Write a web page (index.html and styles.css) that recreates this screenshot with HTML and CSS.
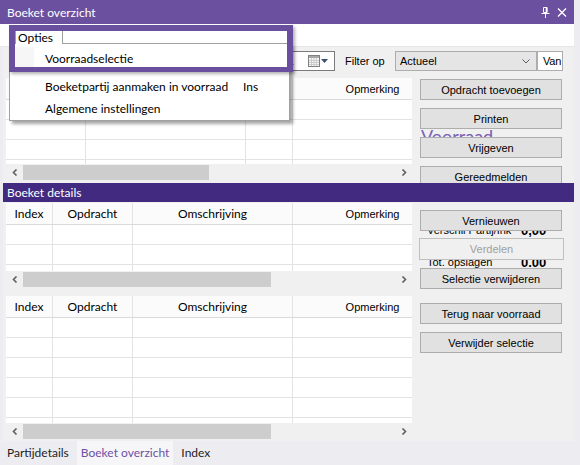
FILE: index.html
```html
<!DOCTYPE html>
<html>
<head>
<meta charset="utf-8">
<title>Boeket overzicht</title>
<link rel="stylesheet" href="styles.css">
</head>
<body>
<div class="app">
  <div class="window">
    <div class="titlebar">
      <span class="title">Boeket overzicht</span>
      <span class="title-icons">
        <svg class="pin" width="9" height="11" viewBox="0 0 9 11"><path d="M2.5 0.5h3.5v5h-3.5z" fill="none" stroke="#fff"/><path d="M5.5 0.5v5" stroke="#fff" stroke-width="1.6"/><path d="M0.5 6.5h8M4.5 6.5v4.5" stroke="#fff"/></svg>
        <svg class="close" width="10" height="9" viewBox="0 0 10 9"><path d="M1 0.5l8 8M9 0.5l-8 8" stroke="#fff" stroke-width="1.3"/></svg>
      </span>
    </div>
    <div class="menubar"></div>

    <div class="panel panel-top">
      <div class="filter-row">
        <div class="datebox">
          <span class="date-text">01-01-2021</span>
          <svg width="12" height="12" viewBox="0 0 12 12"><rect x="0.5" y="0.5" width="11" height="11" fill="#f6f6f6" stroke="#808080"/><rect x="1" y="1" width="10" height="2" fill="#a8a8a8"/><path d="M1 5.5h10M1 7.5h10M1 9.5h10M3.5 3v8M6 3v8M8.5 3v8" stroke="#c4c4c4" stroke-width="0.8"/></svg>
          <svg class="tri" width="7" height="4" viewBox="0 0 7 4"><path d="M0 0h7L3.5 4z" fill="#3d4f70"/></svg>
        </div>
        <span class="filter-label">Filter op</span>
        <div class="combo">
          <span>Actueel</span>
          <svg width="8" height="5" viewBox="0 0 8 5"><path d="M0.5 0.5L4 4L7.5 0.5" fill="none" stroke="#606060"/></svg>
        </div>
        <div class="van">Van</div>
      </div>

      <div class="top-body">
        <div class="grid">
          <div class="grid-view gv1">
            <div class="gtable">
              <div class="grow ghead"><div class="c w80">Opdracht</div><div class="c w160">Omschrijving</div><div class="c w47">Index</div><div class="c w160 classic">Opmerking</div></div>
              <div class="grow"><div class="c w80"></div><div class="c w160"></div><div class="c w47"></div><div class="c w160"></div></div>
              <div class="grow"><div class="c w80"></div><div class="c w160"></div><div class="c w47"></div><div class="c w160"></div></div>
              <div class="grow"><div class="c w80"></div><div class="c w160"></div><div class="c w47"></div><div class="c w160"></div></div>
              <div class="grow"><div class="c w80"></div><div class="c w160"></div><div class="c w47"></div><div class="c w160"></div></div>
            </div>
          </div>
          <div class="hscroll">
            <span class="sarrow"><svg width="6" height="7" viewBox="0 0 6 7"><path d="M4.5 0.5L1.5 3.5L4.5 6.5" fill="none" stroke="#606060" stroke-width="1.6"/></svg></span>
            <div class="track"><div class="thumb thumb-short"></div></div>
            <span class="sarrow"><svg width="6" height="7" viewBox="0 0 6 7"><path d="M1.5 0.5L4.5 3.5L1.5 6.5" fill="none" stroke="#606060" stroke-width="1.6"/></svg></span>
          </div>
        </div>

        <div class="buttons buttons-top">
          <div class="btn">Opdracht toevoegen</div>
          <div class="btn gap8">Printen</div>
          <div class="peek peek-big"><span>Voorraad</span></div>
          <div class="btn">Vrijgeven</div>
          <div class="btn gap8">Gereedmelden</div>
        </div>
      </div>
    </div>

    <div class="sectionbar">Boeket details</div>

    <div class="panel panel-bottom">
      <div class="grids">
        <div class="grid">
          <div class="grid-view gv2">
            <div class="gtable">
              <div class="grow ghead"><div class="c w47">Index</div><div class="c w80">Opdracht</div><div class="c w160">Omschrijving</div><div class="c w160 classic">Opmerking</div></div>
              <div class="grow"><div class="c w47"></div><div class="c w80"></div><div class="c w160"></div><div class="c w160"></div></div>
              <div class="grow"><div class="c w47"></div><div class="c w80"></div><div class="c w160"></div><div class="c w160"></div></div>
              <div class="grow"><div class="c w47"></div><div class="c w80"></div><div class="c w160"></div><div class="c w160"></div></div>
            </div>
          </div>
          <div class="hscroll">
            <span class="sarrow"><svg width="6" height="7" viewBox="0 0 6 7"><path d="M4.5 0.5L1.5 3.5L4.5 6.5" fill="none" stroke="#606060" stroke-width="1.6"/></svg></span>
            <div class="track"><div class="thumb thumb-long"></div></div>
            <span class="sarrow"><svg width="6" height="7" viewBox="0 0 6 7"><path d="M1.5 0.5L4.5 3.5L1.5 6.5" fill="none" stroke="#606060" stroke-width="1.6"/></svg></span>
          </div>
        </div>

        <div class="grid">
          <div class="grid-view gv3">
            <div class="gtable">
              <div class="grow ghead"><div class="c w47">Index</div><div class="c w80">Opdracht</div><div class="c w160">Omschrijving</div><div class="c w160 classic">Opmerking</div></div>
              <div class="grow"><div class="c w47"></div><div class="c w80"></div><div class="c w160"></div><div class="c w160"></div></div>
              <div class="grow"><div class="c w47"></div><div class="c w80"></div><div class="c w160"></div><div class="c w160"></div></div>
              <div class="grow"><div class="c w47"></div><div class="c w80"></div><div class="c w160"></div><div class="c w160"></div></div>
              <div class="grow"><div class="c w47"></div><div class="c w80"></div><div class="c w160"></div><div class="c w160"></div></div>
              <div class="grow"><div class="c w47"></div><div class="c w80"></div><div class="c w160"></div><div class="c w160"></div></div>
              <div class="grow"><div class="c w47"></div><div class="c w80"></div><div class="c w160"></div><div class="c w160"></div></div>
            </div>
          </div>
          <div class="hscroll">
            <span class="sarrow"><svg width="6" height="7" viewBox="0 0 6 7"><path d="M4.5 0.5L1.5 3.5L4.5 6.5" fill="none" stroke="#606060" stroke-width="1.6"/></svg></span>
            <div class="track"><div class="thumb thumb-long"></div></div>
            <span class="sarrow"><svg width="6" height="7" viewBox="0 0 6 7"><path d="M1.5 0.5L4.5 3.5L1.5 6.5" fill="none" stroke="#606060" stroke-width="1.6"/></svg></span>
          </div>
        </div>
      </div>

      <div class="buttons buttons-bottom">
        <div class="btn">Vernieuwen</div>
        <div class="peek peek-a"><span class="plabel">Verschil Partij/Ink</span><span class="pval">0,00</span></div>
        <div class="btn btn-disabled">Verdelen</div>
        <div class="peek peek-b"><span class="plabel">Tot. opslagen</span><span class="pval">0.00</span></div>
        <div class="btn">Selectie verwijderen</div>
        <div class="btn gap14">Terug naar voorraad</div>
        <div class="btn gap8">Verwijder selectie</div>
      </div>
    </div>
  </div>
</div>

<div class="tabs">
  <span class="tab">Partijdetails</span>
  <span class="tab tab-active">Boeket overzicht</span>
  <span class="tab">Index</span>
</div>

<div class="menu">
  <div class="mi mi-first"><span class="mlabel">Voorraadselectie</span></div>
  <div class="mi mi-second"><span class="mlabel">Boeketpartij aanmaken in voorraad</span><span class="mkey">Ins</span></div>
  <div class="mi"><span class="mlabel">Algemene instellingen</span></div>
</div>
<div class="opties">Opties</div>
<div class="frame"></div>
</body>
</html>
```

FILE: styles.css
```css
* { box-sizing: border-box; }
html, body { margin: 0; padding: 0; }
body {
  width: 580px;
  height: 465px;
  overflow: hidden;
  position: relative;
  background: #ededf1;
  font-family: Lato, "Segoe UI", sans-serif;
  font-size: 12px;
  color: #000;
}
.app { display: flex; }
.window { width: 574px; display: flex; flex-direction: column; }

.titlebar {
  height: 24px;
  background: #6c50a0;
  color: #fff;
  display: flex;
  align-items: center;
  justify-content: space-between;
  padding: 0 7px;
}
.title { font-size: 12px; }
.title-icons { display: flex; align-items: center; gap: 7px; }
.title-icons svg { display: block; }
.pin { margin-top: 1px; }

.menubar { height: 23px; background: #fff; border-bottom: 1px solid #e6e6e6; }

.panel { margin-left: 3px; background: #f0f0f0; }
.panel-top { height: 136px; overflow: hidden; padding: 4px 0 0 3px; }

.classic, .filter-label, .combo, .van, .btn, .date-text, .peek-a, .peek-b {
  font-family: "Liberation Sans", Arial, sans-serif;
  font-size: 11px;
}

.filter-row {
  height: 20px;
  display: flex;
  justify-content: flex-end;
  align-items: stretch;
  padding-right: 11px;
}
.datebox {
  width: 135px;
  margin-right: 10px;
  background: #fff;
  border: 1px solid #7a7a7a;
  display: flex;
  align-items: center;
  justify-content: flex-end;
  padding-right: 6px;
}
.date-text { margin-right: 14px; }
.tri { margin-left: 1px; }
.filter-label { width: 50px; display: flex; align-items: center; }
.combo {
  width: 142px;
  background: #e5e5e5;
  border: 1px solid #adadad;
  display: flex;
  align-items: center;
  justify-content: space-between;
  padding: 0 6px 0 4px;
}
.van {
  width: 26px;
  background: #fff;
  border: 1px solid #adadad;
  padding-left: 5px;
  letter-spacing: -0.2px;
  display: flex;
  align-items: center;
  overflow: hidden;
  white-space: nowrap;
}

.top-body { display: flex; margin-top: 7px; }

.grid { width: 406px; display: flex; flex-direction: column; }
.grid-view { background: #fff; overflow: hidden; }
.gv1 { height: 86px; }
.gv2 { height: 68px; }
.gv3 { height: 127px; }
.gtable { width: 447px; }
.grow { display: flex; height: 20px; border-bottom: 1px solid #e3e3e3; }
.ghead { height: 22px; background: #fbfbfb; border-bottom: 1px solid #dadada; }
.c {
  flex: none;
  border-right: 1px solid #e3e3e3;
  display: flex;
  align-items: center;
  justify-content: center;
  white-space: nowrap;
}
.w47 { width: 47px; }
.w80 { width: 80px; }
.w160 { width: 160px; }

.hscroll { height: 17px; display: flex; background: #f0f0f0; }
.sarrow { width: 17px; display: flex; align-items: center; justify-content: center; }
.sarrow svg { display: block; }
.track { flex: 1; display: flex; align-items: center; }
.thumb { height: 15px; background: #cdcdcd; }
.thumb-short { width: 186px; }
.thumb-long { width: 248px; }

.buttons { width: 142px; margin-left: 8px; display: flex; flex-direction: column; }
.buttons-top { padding-top: 1px; }
.btn {
  height: 21px;
  flex: none;
  background: #e1e1e1;
  border: 1px solid #adadad;
  display: flex;
  align-items: center;
  justify-content: center;
  white-space: nowrap;
}
.gap8 { margin-top: 8px; }
.gap14 { margin-top: 14px; }
.btn-disabled {
  height: 22px;
  margin-left: -1px;
  width: 145px;
  background: #f0f0f0;
  border-color: #bfbfbf;
  color: #a0a0a0;
}

.peek { flex: none; overflow: hidden; display: flex; white-space: nowrap; }
.peek-big { height: 8px; }
.peek-big span {
  font-size: 18px;
  line-height: 15px;
  color: #7a5fb6;
  display: block;
  margin-left: 1px;
}
.peek-a { height: 7px; }
.peek-b { height: 8px; }
.peek-a span, .peek-b span { display: block; line-height: 13px; }
.peek-a span { margin-top: -7px; }
.peek-b span { margin-top: -4px; }
.plabel { width: 94px; margin-left: 7px; }
.pval { font-weight: bold; font-size: 13px; }

.sectionbar {
  height: 19px;
  margin-left: 3px;
  background: #422a80;
  color: #fff;
  line-height: 19px;
  padding-left: 4px;
}

.panel-bottom { height: 239px; padding: 1px 0 0 3px; display: flex; }
.grids { width: 406px; display: flex; flex-direction: column; gap: 8px; }
.buttons-bottom { padding-top: 7px; }

.tabs {
  height: 24px;
  display: flex;
  padding-left: 3px;
  gap: 4px;
  background: #ededf1;
}
.tab { padding: 0 4px; line-height: 23px; color: #1e1e1e; }
.tab-active { background: #f6f6f8; color: #6d51a5; }

/* Opened dropdown menu with tutorial highlight */
.menu {
  position: absolute;
  left: 9px;
  top: 43px;
  width: 281px;
  height: 78px;
  background: #fff;
  border: 1px solid #a0a0a0;
  box-shadow: 3px 3px 3px rgba(0, 0, 0, 0.35);
  padding-top: 3px;
  z-index: 1;
}
.mi { height: 22px; display: flex; align-items: center; padding-left: 35px; white-space: nowrap; }
.mi-first { background: linear-gradient(to right, #f6f6f6 0, #f6f6f6 24px, #fff 24px); }
.mi-second { margin-top: 6px; }
.mlabel { width: 198px; }
.opties {
  position: absolute;
  left: 15px;
  top: 30px;
  width: 48px;
  height: 14px;
  background: #fff;
  border: 1px solid #a0a0a0;
  border-bottom: none;
  line-height: 13px;
  padding-left: 2px;
  z-index: 2;
}
.frame {
  position: absolute;
  left: 9px;
  top: 25px;
  width: 284px;
  height: 47px;
  border: 6px solid #6b4f9f;
  border-bottom-width: 5px;
  box-shadow: 2px 2px 3px rgba(0, 0, 0, 0.3);
  z-index: 3;
}
```
